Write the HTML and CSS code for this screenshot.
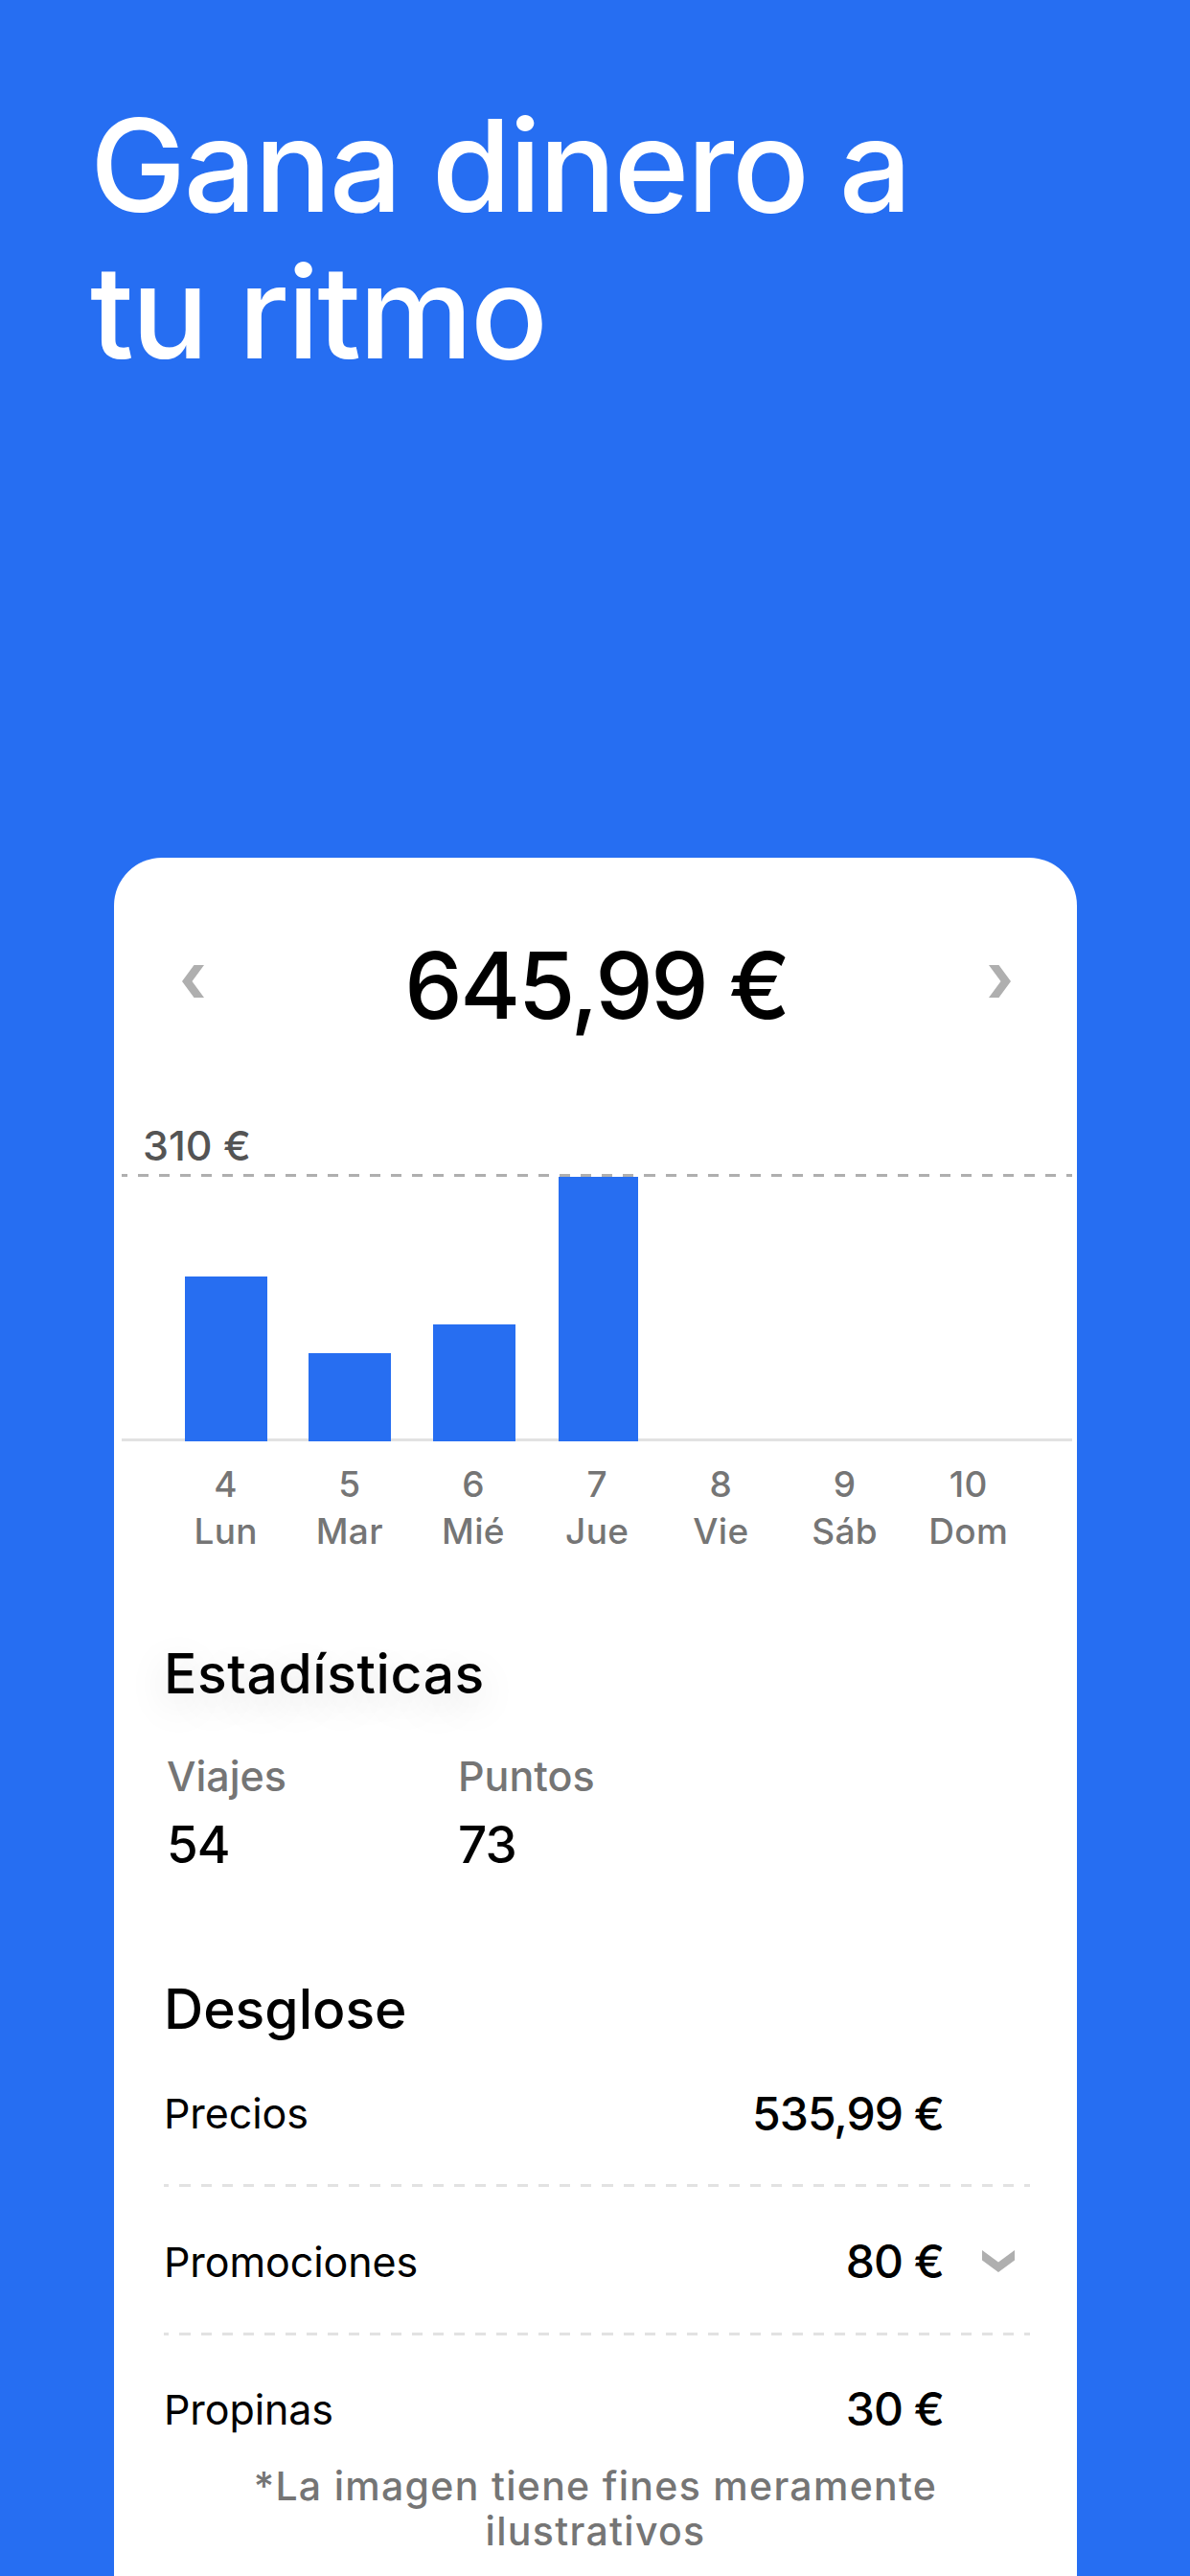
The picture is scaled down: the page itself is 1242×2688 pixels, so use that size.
FILE: index.html
```html
<!DOCTYPE html>
<html lang="es">
<head>
    <meta charset="UTF-8">
    <meta name="viewport" content="width=device-width, initial-scale=1.0">
    <title>Gana dinero a tu ritmo</title>
    <link rel="stylesheet" href="styles.css">
</head>
<body>
    <h1 class="headline">Gana dinero a<br>tu ritmo</h1>

    <main class="card">
        <div class="total-row">
            <svg class="arrow" width="23" height="34" viewBox="0 0 23 34"><path d="M12.5 0H23L10.5 17L23 34H12.5L0 17Z"/></svg>
            <div class="total">645,99 €</div>
            <svg class="arrow" width="23" height="34" viewBox="0 0 23 34"><path d="M10.5 0H0L12.5 17L0 34H10.5L23 17Z"/></svg>
        </div>

        <div class="peak">310 €</div>
        <div class="plot">
            <div class="bar-slot"><div class="bar" style="height: 171.5px"></div></div>
            <div class="bar-slot"><div class="bar" style="height: 91.5px"></div></div>
            <div class="bar-slot"><div class="bar" style="height: 121.5px"></div></div>
            <div class="bar-slot"><div class="bar bar-selected" style="height: 276px"></div></div>
        </div>
        <div class="days">
            <div>4<br>Lun</div>
            <div>5<br>Mar</div>
            <div>6<br>Mié</div>
            <div>7<br>Jue</div>
            <div>8<br>Vie</div>
            <div>9<br>Sáb</div>
            <div>10<br>Dom</div>
        </div>

        <h2 class="section-title stats-title">Estadísticas</h2>
        <div class="stats">
            <div class="stat">
                <div class="stat-label">Viajes</div>
                <div class="stat-value">54</div>
            </div>
            <div class="stat">
                <div class="stat-label">Puntos</div>
                <div class="stat-value">73</div>
            </div>
        </div>

        <h2 class="section-title breakdown-title">Desglose</h2>
        <div class="breakdown">
            <div class="row">
                <span class="row-label">Precios</span>
                <span class="row-value">535,99 €</span>
            </div>
            <div class="row">
                <span class="row-label">Promociones</span>
                <span class="row-value">80 €</span>
                <svg class="arrow row-arrow" width="34" height="23" viewBox="0 0 34 23"><path d="M0 0L17 12.5L34 0V10.5L17 23L0 10.5Z"/></svg>
            </div>
            <div class="row">
                <span class="row-label">Propinas</span>
                <span class="row-value">30 €</span>
            </div>
        </div>

        <p class="note">*La imagen tiene fines meramente<br>ilustrativos</p>
    </main>
</body>
</html>
```
FILE: styles.css
```css
* {
    box-sizing: border-box;
}
body {
    margin: 0;
    height: 2688px;
    overflow: hidden;
    background-color: #266ef2;
    color: #000;
    font-family: Inter, "Liberation Sans", sans-serif;
    font-weight: 500;
}
.headline {
    margin: 0;
    height: 895px;
    padding: 96px 0 0 94px;
    color: #fff;
    font-size: 134px;
    font-weight: 500;
    line-height: 153px;
    letter-spacing: -2.4px;
}
.card {
    width: 1005px;
    height: 1793px;
    margin-left: 119px;
    padding-top: 85px;
    background-color: #fff;
    border-radius: 50px 50px 0 0;
}

/* Weekly total */
.total-row {
    display: flex;
    align-items: center;
    justify-content: space-between;
    padding: 0 69px 0 71px;
}
.total {
    font-size: 96px;
    line-height: 96px;
    letter-spacing: -2.4px;
}
.arrow {
    display: block;
    fill: #afafaf;
}
.total-row .arrow {
    margin-top: -8px;
}

/* Chart */
.peak {
    margin: 98px 0 9px 30px;
    color: #545454;
    font-size: 43px;
    line-height: 42px;
}
.plot {
    display: grid;
    grid-template-columns: repeat(7, 129.6px);
    height: 278.5px;
    margin: 0 5px 0 8px;
    padding-left: 44px;
    background:
        repeating-linear-gradient(90deg, #afafaf 0 5.5px, transparent 5.5px 16.5px, #afafaf 16.5px 22.04px) top / 100% 3px no-repeat,
        linear-gradient(#e2e2e2, #e2e2e2) bottom / 100% 3px no-repeat;
}
.bar-slot {
    display: flex;
    align-items: flex-end;
    justify-content: center;
}
.bar {
    width: 86px;
    background-color: #276ef1;
}
.bar-selected {
    width: 83px;
}
.days {
    display: grid;
    grid-template-columns: repeat(7, 129.2px);
    margin: 20.5px 0 0 52px;
    color: #757575;
    font-size: 37px;
    line-height: 49px;
    letter-spacing: 0.3px;
    text-align: center;
}

/* Stats */
.section-title {
    margin: 0 0 0 52px;
    font-size: 57px;
    font-weight: 500;
    line-height: 57px;
}
.stats-title {
    margin-top: 96px;
    letter-spacing: 0.6px;
    text-shadow: 0 12px 40px rgba(0, 0, 0, 0.15);
}
.stats {
    display: flex;
    margin: 57px 0 0 55px;
}
.stat {
    width: 304px;
}
.stat-label {
    color: #757575;
    font-size: 43px;
    line-height: 42px;
}
.stat-value {
    margin-top: 25px;
    font-size: 53px;
    line-height: 53px;
    letter-spacing: -1px;
}

/* Breakdown */
.breakdown-title {
    margin-top: 116px;
}
.breakdown {
    margin: 3px 49px 0 52px;
}
.row {
    display: grid;
    grid-template-columns: 1fr auto 90px;
    align-items: center;
    height: 154.4px;
    background: repeating-linear-gradient(90deg, #e2e2e2 0 5.5px, transparent 5.5px 16.5px, #e2e2e2 16.5px 22.05px) bottom / 100% 3px no-repeat;
}
.row:last-child {
    height: 134px;
    padding-top: 20px;
    background: none;
}
.row-label {
    font-size: 43px;
    font-weight: 400;
    letter-spacing: -0.1px;
}
.row-value {
    font-size: 48px;
    letter-spacing: -1px;
}
.row-arrow {
    justify-self: end;
    margin-right: 16px;
}
.note {
    margin: 0;
    color: #757575;
    font-size: 41px;
    line-height: 47px;
    letter-spacing: 1.3px;
    text-align: center;
}
```
